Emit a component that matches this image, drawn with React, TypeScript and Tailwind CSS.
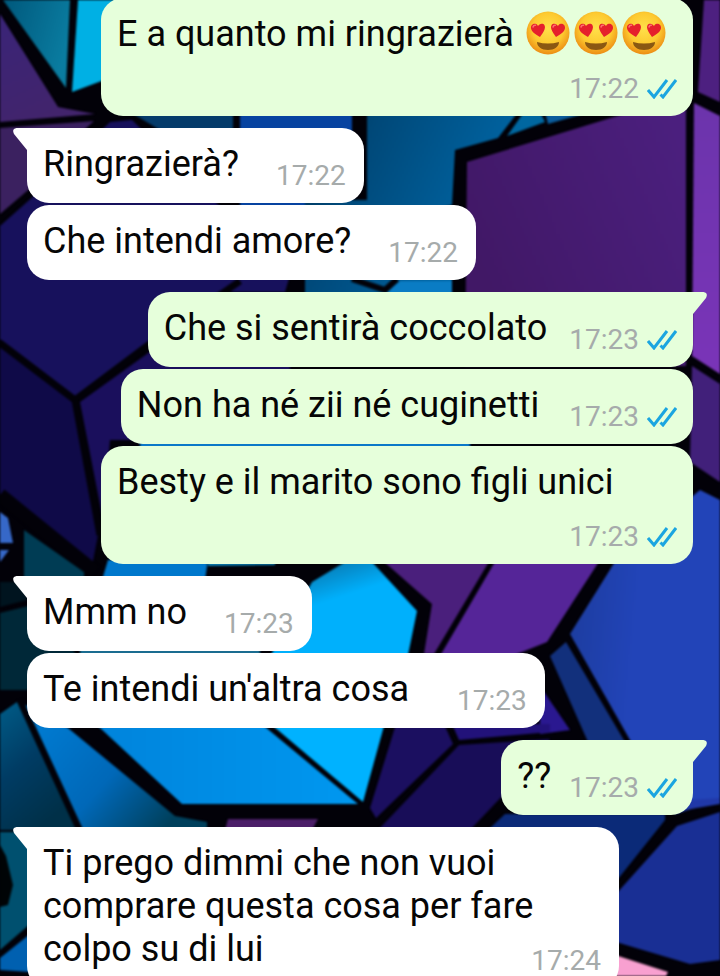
import { clsx } from 'clsx';

interface Message {
  id: number;
  text: string;
  time: string;
  sent?: boolean;
  first?: boolean;
  hearts?: number;
  gap?: string;
}

const messages: Message[] = [
  { id: 1, text: 'E a quanto mi ringrazierà', time: '17:22', sent: true, hearts: 3 },
  { id: 2, text: 'Ringrazierà?', time: '17:22', first: true },
  { id: 3, text: 'Che intendi amore?', time: '17:22' },
  { id: 4, text: 'Che si sentirà coccolato', time: '17:23', sent: true, first: true, gap: 'ml-[22px]' },
  { id: 5, text: 'Non ha né zii né cuginetti', time: '17:23', sent: true, gap: 'ml-[30px]' },
  { id: 6, text: 'Besty e il marito sono figli unici', time: '17:23', sent: true },
  { id: 7, text: 'Mmm no', time: '17:23', first: true },
  { id: 8, text: "Te intendi un'altra cosa", time: '17:23', gap: 'ml-12' },
  { id: 9, text: '??', time: '17:23', sent: true, first: true },
  {
    id: 10,
    text: 'Ti prego dimmi che non vuoi comprare questa cosa per fare colpo su di lui',
    time: '17:24',
    first: true,
  },
];

// glass pieces of the wallpaper, painted on black
const shards: [string, string][] = [
  ['url(#teal)', '3,0 70,0 66,88'],
  ['#00b0e4', '78,0 115,0 115,76 72,92'],
  ['url(#violetLeft)', '0,14 58,107 95,114 0,122'],
  ['#3b2160', '0,128 94,121 84,130 40,180 0,214'],
  ['#17115c', '0,226 36,194 110,122 132,120 290,275 285,292 221,292 147,342 75,396 0,339'],
  ['#053b6a', '130,112 233,112 233,130 160,130'],
  ['#0743a0', '240,112 352,112 352,210 240,210'],
  ['url(#deepBlue)', '367,112 518,112 498,138 455,150 452,205 440,208 452,222 452,300 305,300 305,200 367,200'],
  ['#0067a0', '524,112 540,112 545,122 507,136'],
  ['#0a7cc4', '388,290 400,281 452,281 452,300 388,300'],
  ['url(#violetMain)', '467,162 650,106 686,106 686,366 465,366'],
  ['#0a5c9c', '545,112 590,112 548,124'],
  ['#4d2080', '704,0 720,0 720,102 698,92'],
  ['url(#violetRight)', '694,103 720,116 720,374 692,356'],
  ['#41207a', '692,366 720,384 720,482 690,462'],
  ['#1a0f5c', '222,300 290,300 290,440 110,440 103,520 80,402'],
  ['#0f0a48', '0,347 73,402 99,530 92,566 0,494'],
  ['#0a78c8', '140,440 470,440 470,455 140,455'],
  ['#3668c8', '0,512 8,518 13,543 0,543'],
  ['#3668c8', '0,550 9,550 0,562'],
  ['#003c54', '24,530 84,572 84,590 24,580'],
  ['#00141f', '0,582 27,582 27,600 0,607'],
  ['#002838', '0,613 40,603 80,660 27,690 0,690'],
  ['#0078cc', '108,560 208,560 205,580 102,580'],
  ['#0a80b8', '208,560 275,560 275,565 208,566'],
  ['#1a6c90', '80,648 260,648 260,656 80,656'],
  ['url(#cyanMid)', '312,582 345,562 372,562 417,611 407,660 268,660'],
  ['#4a1f7c', '382,560 490,560 434,654 424,654 432,604'],
  ['#552598', '496,560 600,560 547,642 512,656 440,656'],
  ['url(#royal)', '616,560 700,490 720,500 720,800 675,814 630,740 570,634'],
  ['#12307c', '550,656 566,642 625,742 588,742'],
  ['#2a1890', '540,686 570,730 540,734'],
  ['url(#tealLow)', '0,714 17,702 76,830 0,830'],
  ['url(#steel)', '24,704 68,728 175,816 207,822 207,830 83,830'],
  ['url(#azure)', '98,726 264,726 358,804 182,804'],
  ['#00b2ff', '273,726 384,726 363,802'],
  ['#1b0f60', '396,724 444,724 453,744 376,818 370,808'],
  ['#22127a', '452,724 550,724 550,732 459,740'],
  ['#180d58', '459,745 550,739 508,790 470,830 378,830'],
  ['#4b1f68', '228,819 318,819 312,830 225,830'],
  ['#0b2a78', '488,830 505,814 665,814 665,820 614,884 600,830'],
  ['#192f94', '720,812 677,826 616,894 616,942 690,964 720,960'],
  ['#2038a8', '674,812 690,800 720,798 720,804'],
  ['#f8a0d0', '612,954 668,972 664,980 612,980'],
  ['#00506f', '0,832 30,832 30,924 0,950'],
  ['#000406', '0,845 6,856 13,885 8,905 0,907'],
  ['#0060b0', '0,958 30,934 30,972 0,970'],
];

const cracks: [string, number][] = [
  ['M0 343 75 400 147 346 240 281', 7],
  ['M75 400 100 535', 7],
  ['M352 279 385 290 397 279', 6],
  ['M0 495 95 572', 14],
  ['M20 700 80 830', 6],
];

const Wallpaper = () => (
  <svg
    className="absolute inset-0 h-full w-full blur-[1px]"
    viewBox="0 0 720 976"
    preserveAspectRatio="xMidYMid slice"
    aria-hidden="true"
  >
    <defs>
      <linearGradient id="teal" x1="0" y1="0" x2="1" y2="0.4">
        <stop offset="0" stopColor="#00587c" />
        <stop offset="1" stopColor="#0a7ca0" />
      </linearGradient>
      <linearGradient id="violetLeft" x1="0" y1="0" x2="0.4" y2="1">
        <stop offset="0" stopColor="#3a2478" />
        <stop offset="1" stopColor="#42246c" />
      </linearGradient>
      <linearGradient id="deepBlue" x1="0" y1="0" x2="1" y2="0.4">
        <stop offset="0" stopColor="#003052" />
        <stop offset="0.3" stopColor="#004878" />
        <stop offset="1" stopColor="#0068a8" />
      </linearGradient>
      <linearGradient id="violetMain" x1="0" y1="0.5" x2="1" y2="0">
        <stop offset="0" stopColor="#411866" />
        <stop offset="1" stopColor="#4c2080" />
      </linearGradient>
      <linearGradient id="violetRight" x1="0" y1="0" x2="0" y2="1">
        <stop offset="0" stopColor="#6c34ac" />
        <stop offset="1" stopColor="#7a34b8" />
      </linearGradient>
      <linearGradient id="cyanMid" x1="0.2" y1="0" x2="0.4" y2="0.4">
        <stop offset="0" stopColor="#0a6ca0" />
        <stop offset="1" stopColor="#00b0fc" />
      </linearGradient>
      <linearGradient id="royal" x1="0" y1="0" x2="0.5" y2="0.1">
        <stop offset="0" stopColor="#1c3c9c" />
        <stop offset="1" stopColor="#2244b8" />
      </linearGradient>
      <linearGradient id="tealLow" x1="0" y1="0" x2="0.5" y2="1">
        <stop offset="0" stopColor="#005c88" />
        <stop offset="0.5" stopColor="#003c64" />
        <stop offset="1" stopColor="#003048" />
      </linearGradient>
      <linearGradient id="steel" x1="0" y1="0" x2="1" y2="0.6">
        <stop offset="0" stopColor="#0080d8" />
        <stop offset="0.6" stopColor="#0068b8" />
        <stop offset="1" stopColor="#00405c" />
      </linearGradient>
      <linearGradient id="azure" x1="0" y1="0" x2="1" y2="0">
        <stop offset="0" stopColor="#0084dc" />
        <stop offset="1" stopColor="#0098f0" />
      </linearGradient>
    </defs>
    {shards.map(([fill, points]) => (
      <polygon key={points} fill={fill} points={points} />
    ))}
    {cracks.map(([d, width]) => (
      <path key={d} d={d} fill="none" stroke="#020108" strokeWidth={width} />
    ))}
  </svg>
);

const HeartEyes = () => (
  <svg
    className="-mt-2 mr-1 inline-block h-11 w-11 align-[-9px]"
    viewBox="0 0 44 44"
    role="img"
    aria-label="faccina con gli occhi a cuore"
  >
    <defs>
      <radialGradient id="face" cx="0.5" cy="0.4" r="0.6">
        <stop offset="0" stopColor="#ffe04a" />
        <stop offset="0.6" stopColor="#fdca30" />
        <stop offset="1" stopColor="#ec8c14" />
      </radialGradient>
    </defs>
    <circle cx="22" cy="22" r="21.5" fill="url(#face)" />
    <path
      d="M14 26C9.500 23.500 5.500 21 5 17.300 4.600 14 7.200 12.300 9.300 12.800 10.500 13 11.500 14 12 15 12.800 13.400 14.800 12.200 16.700 12.800 19 13.600 19.400 16 18.600 18.300 17.500 21.500 15.500 24 14 26Z"
      fill="#e5202c"
    />
    <path
      d="M30 26C28.500 24 26.500 21.500 25.400 18.300 24.600 16 25 13.600 27.300 12.800 29.200 12.200 31.200 13.400 32 15 32.500 14 33.500 13 34.700 12.800 36.800 12.300 39.400 14 39 17.300 38.500 21 34.500 23.500 30 26Z"
      fill="#e5202c"
    />
    <path
      d="M7 16Q7.500 14 9.500 14.200M27 16Q27.500 14 29.300 14.200"
      stroke="#ff7070"
      strokeWidth="1.500"
      fill="none"
      strokeLinecap="round"
    />
    <path d="M11 31Q22 34 33 31C33 35.500 28.500 39 22 39S11 35.500 11 31Z" fill="#8a5812" />
  </svg>
);

const ReadTicks = () => (
  <svg className="ml-2 h-5 w-[30px]" viewBox="0 0 30 20" fill="none" role="img" aria-label="letto">
    <path d="M1 11 7 18 20 1M13.500 15.500 16 18 29 1" stroke="#1ba5e0" strokeWidth="3" />
  </svg>
);

const Tail = ({ sent }: { sent?: boolean }) => (
  <svg
    className={clsx(
      'absolute top-0 h-[22px] w-[15px]',
      sent ? '-right-[14px] -scale-x-100 text-[#e6ffdb]' : '-left-[14px] text-white',
    )}
    viewBox="0 0 15 22"
    aria-hidden="true"
  >
    <path d="M15 0H3.500Q-1.500 1 1 6L14 22H15Z" fill="currentColor" />
  </svg>
);

const Bubble = ({ text, time, sent, first, gap, hearts = 0 }: Message) => (
  <li
    className={clsx(
      'relative flow-root max-w-[calc(100%-74px)] rounded-[22px] pt-[15px] pb-[11px] pl-4',
      sent ? 'self-end bg-[#e6ffdb] pr-4' : 'self-start bg-white pr-[18px]',
      first ? 'mt-3' : 'mt-0.5 first:-mt-0.5',
      first && (sent ? 'rounded-tr-none' : 'rounded-tl-none'),
    )}
  >
    {first && <Tail sent={sent} />}
    <span className="text-[36px] leading-[43px] text-[#060606]">
      {text}
      {hearts > 0 && (
        <span className="ml-3 whitespace-nowrap">
          {Array.from({ length: hearts }, (_, i) => (
            <HeartEyes key={i} />
          ))}
        </span>
      )}
    </span>
    <span
      className={clsx(
        'float-right mt-[17px] flex h-8 items-center text-[28px] leading-8 text-[#a6abab]',
        gap ?? (sent ? 'ml-[18px]' : 'ml-[37px]'),
      )}
    >
      <time>{time}</time>
      {sent && <ReadTicks />}
    </span>
  </li>
);

const App = () => (
  <main className="relative h-screen overflow-hidden bg-[#020108] font-[Roboto,sans-serif]">
    <Wallpaper />
    <ul className="relative flex flex-col px-[27px]">
      {messages.map((message) => (
        <Bubble key={message.id} {...message} />
      ))}
    </ul>
  </main>
);

export default App;
